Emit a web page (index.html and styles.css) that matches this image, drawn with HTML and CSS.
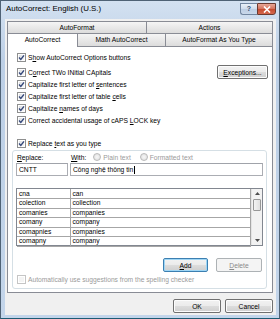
FILE: index.html
```html
<!DOCTYPE html>
<html lang="en">
<head>
    <meta charset="UTF-8">
    <title>AutoCorrect: English (U.S.)</title>
    <link rel="stylesheet" href="styles.css">
</head>
<body>
    <div class="window">
        <div class="titlebar">
            <span class="title">AutoCorrect: English (U.S.)</span>
            <div class="caption">
                <span class="cap-help">?</span>
                <span class="cap-close">
                    <svg width="8" height="7" viewBox="0 0 8 7"><path d="M1 0.5 L7 6.5 M7 0.5 L1 6.5" stroke="#fff" stroke-width="1.6"/></svg>
                </span>
            </div>
        </div>

        <div class="client">
            <div class="tabs">
                <div class="tab-row back">
                    <div class="tab w-139">AutoFormat</div>
                    <div class="tab w-127">Actions</div>
                </div>
                <div class="tab-row front">
                    <div class="tab selected w-70">AutoCorrect</div>
                    <div class="tab w-88">Math AutoCorrect</div>
                    <div class="tab w-108">AutoFormat As You Type</div>
                </div>
            </div>

            <div class="panel">
                <label class="opt">
                    <span class="cb checked"><svg viewBox="0 0 7 7"><path d="M1 3.6 L2.8 5.4 L6 1.4" /></svg></span>
                    <span>S<u>h</u>ow AutoCorrect Options buttons</span>
                </label>

                <div class="opt-group">
                    <div class="opt-list">
                        <label class="opt">
                            <span class="cb checked"><svg viewBox="0 0 7 7"><path d="M1 3.6 L2.8 5.4 L6 1.4" /></svg></span>
                            <span>C<u>o</u>rrect TWo INitial CApitals</span>
                        </label>
                        <label class="opt">
                            <span class="cb checked"><svg viewBox="0 0 7 7"><path d="M1 3.6 L2.8 5.4 L6 1.4" /></svg></span>
                            <span>Capitalize first letter of <u>s</u>entences</span>
                        </label>
                        <label class="opt">
                            <span class="cb checked"><svg viewBox="0 0 7 7"><path d="M1 3.6 L2.8 5.4 L6 1.4" /></svg></span>
                            <span>Capitalize first letter of table <u>c</u>ells</span>
                        </label>
                        <label class="opt">
                            <span class="cb checked"><svg viewBox="0 0 7 7"><path d="M1 3.6 L2.8 5.4 L6 1.4" /></svg></span>
                            <span>Capitalize <u>n</u>ames of days</span>
                        </label>
                        <label class="opt">
                            <span class="cb checked"><svg viewBox="0 0 7 7"><path d="M1 3.6 L2.8 5.4 L6 1.4" /></svg></span>
                            <span>Correct accidental usage of cAPS <u>L</u>OCK key</span>
                        </label>
                    </div>
                    <button class="btn exceptions"><u>E</u>xceptions...</button>
                </div>

                <label class="opt replace-opt">
                    <span class="cb checked"><svg viewBox="0 0 7 7"><path d="M1 3.6 L2.8 5.4 L6 1.4" /></svg></span>
                    <span>Replace <u>t</u>ext as you type</span>
                </label>

                <div class="replace-box">
                    <div class="field-labels">
                        <span class="lbl-replace"><u>R</u>eplace:</span>
                        <div class="with-line">
                            <span><u>W</u>ith:</span>
                            <span class="radio"></span><span class="disabled">Plain text</span>
                            <span class="radio second"></span><span class="disabled">Formatted text</span>
                        </div>
                    </div>
                    <div class="fields">
                        <div class="textbox short">CNTT</div>
                        <div class="textbox long">Công nghệ thông tin<span class="caret"></span></div>
                    </div>

                    <div class="listbox">
                        <table class="entries">
                            <tr><td class="from">cna</td><td>can</td></tr>
                            <tr><td class="from">colection</td><td>collection</td></tr>
                            <tr><td class="from">comanies</td><td>companies</td></tr>
                            <tr><td class="from">comany</td><td>company</td></tr>
                            <tr><td class="from">comapnies</td><td>companies</td></tr>
                            <tr><td class="from">comapny</td><td>company</td></tr>
                        </table>
                        <div class="scrollbar">
                            <div class="sb-arrow">
                                <svg width="5" height="3" viewBox="0 0 5 3"><path d="M0 3 L2.5 0 L5 3 Z" fill="#4d4d4d"/></svg>
                            </div>
                            <div class="sb-thumb"></div>
                            <div class="sb-track"></div>
                            <div class="sb-arrow">
                                <svg width="5" height="3" viewBox="0 0 5 3"><path d="M0 0 L2.5 3 L5 0 Z" fill="#4d4d4d"/></svg>
                            </div>
                        </div>
                    </div>

                    <div class="list-buttons">
                        <button class="btn default"><u>A</u>dd</button>
                        <button class="btn off"><u>D</u>elete</button>
                    </div>

                    <label class="opt auto-opt">
                        <span class="cb off"></span>
                        <span class="disabled">Automatically use suggestions from the spelling checker</span>
                    </label>
                </div>
            </div>

            <div class="footer">
                <button class="btn">OK</button>
                <button class="btn">Cancel</button>
            </div>
        </div>
    </div>
</body>
</html>
```

FILE: styles.css
```css
* {
    box-sizing: border-box;
}
body {
    margin: 0;
    font-family: "Liberation Sans", Arial, sans-serif;
    font-size: 6.7px;
    color: #000;
}
.window {
    width: 280px;
    height: 319px;
    display: flex;
    flex-direction: column;
    padding: 0 3px 3px 4px;
    background: linear-gradient(#d3e1f1, #bccfe6 60px, #c3d5ea);
    border: 1px solid #4f6275;
    border-bottom-color: #1d5b73;
}

/* title bar */
.titlebar {
    height: 18px;
    display: flex;
    justify-content: space-between;
    flex-shrink: 0;
}
.title {
    font-size: 7.9px;
    line-height: 16px;
    padding-left: 1px;
}
.caption {
    display: flex;
    margin-top: 2px;
    height: 12px;
}
.cap-help {
    width: 17px;
    border: 1px solid #7286a0;
    border-right: none;
    border-radius: 0 0 0 3px;
    background: linear-gradient(#e9f0f8, #cfdcec 50%, #bccde3 50%, #c9d8ea);
    color: #2e4a6e;
    font-size: 7px;
    font-weight: bold;
    text-align: center;
    line-height: 10px;
}
.cap-close {
    width: 19px;
    border: 1px solid #6b3a30;
    border-radius: 0 0 3px 0;
    background: linear-gradient(#e7a797, #d4715b 50%, #c44a2f 50%, #d4674d);
    display: flex;
    align-items: center;
    justify-content: center;
}

/* dialog face */
.client {
    flex: 1;
    display: flex;
    flex-direction: column;
    background: #f0f0f0;
    padding: 2px 3px 0 2px;
}

/* tabs */
.tab-row {
    display: flex;
    height: 12px;
}
.tab-row.front {
    height: 13px;
}
.tab {
    border: 1px solid #898c95;
    border-bottom: none;
    margin-right: -1px;
    background: linear-gradient(#f5f5f5, #e6e6e6 60%, #dcdcdc);
    text-align: center;
    line-height: 11px;
}
.tab-row.front .tab {
    line-height: 12px;
}
.tab:last-child {
    margin-right: 0;
}
.tab.selected {
    background: #fff;
    position: relative;
    z-index: 1;
    margin-bottom: -1px;
    height: 14px;
}
.w-139 { width: 140px; }
.w-127 { width: 127px; }
.w-70 { width: 71px; }
.w-88 { width: 89px; }
.w-108 { width: 108px; }

/* tab page */
.panel {
    height: 247px;
    flex-shrink: 0;
    background: #fff;
    border: 1px solid #898c95;
    padding: 5px 4px 0 9px;
}
.opt {
    display: flex;
    align-items: center;
    height: 11px;
}
.opt-group {
    display: flex;
    justify-content: space-between;
    margin-top: 3px;
}
.opt-list .opt {
    height: 12px;
}
.cb {
    width: 9px;
    height: 9px;
    margin-right: 2px;
    border: 1px solid #8e8f8f;
    background: linear-gradient(135deg, #d9dcdf, #f8f8f8);
    box-shadow: inset 0 0 0 1px #fff;
    display: flex;
    align-items: center;
    justify-content: center;
    flex-shrink: 0;
}
.cb svg {
    width: 7px;
    height: 7px;
}
.cb path {
    fill: none;
    stroke: #34477a;
    stroke-width: 1.4;
}
.cb.off {
    border-color: #c5c5c5;
    background: #f4f4f4;
}
.disabled {
    color: #9a9a9a;
}

/* buttons */
.btn {
    height: 14px;
    padding: 0;
    font: inherit;
    color: #000;
    border: 1px solid #707070;
    border-radius: 2px;
    background: linear-gradient(#f2f2f2, #ebebeb 50%, #dddddd 50%, #cfcfcf);
    box-shadow: inset 0 0 0 1px #fcfcfc;
}
.btn.exceptions {
    width: 51px;
    margin-top: -1px;
}
.btn.default {
    border-color: #3c7fb1;
    box-shadow: inset 0 0 0 1px #9fd6f5;
    width: 45px;
}
.btn.off {
    width: 46px;
    color: #8a8a8a;
    border-color: #adb2b5;
    background: #f4f4f4;
    box-shadow: none;
}

/* replace section */
.replace-opt {
    margin-top: 11px;
    height: 12px;
}
.replace-box {
    margin: 1px 1px 0 -5px;
    height: 139px;
    border: 1px solid #d5dfe5;
    border-radius: 3px;
    padding: 0 3px 0 3px;
}
.field-labels {
    display: flex;
    height: 12px;
    align-items: center;
}
.lbl-replace {
    width: 55px;
    padding-left: 1px;
}
.with-line {
    display: flex;
    align-items: center;
}
.radio {
    width: 8px;
    height: 8px;
    margin: 0 2px 0 7px;
    border: 1px solid #b9b9b9;
    border-radius: 50%;
    background: radial-gradient(#f7f7f7, #dcdcdc);
}
.radio.second {
    margin-left: 9px;
}
.fields {
    display: flex;
    gap: 2px;
}
.textbox {
    height: 13px;
    border: 1px solid #abadb3;
    border-top-color: #a0a3aa;
    background: #fff;
    padding-left: 2px;
    line-height: 11px;
    display: flex;
    align-items: center;
}
.textbox.short {
    width: 52px;
}
.textbox.long {
    flex: 1;
}
.caret {
    width: 1px;
    height: 8px;
    background: #000;
    margin-left: 1px;
}
.listbox {
    margin-top: 12px;
    height: 58px;
    border: 1px solid #828790;
    display: flex;
}
.entries {
    flex: 1;
    border-collapse: collapse;
    align-self: flex-start;
}
.entries td {
    height: 9.5px;
    padding: 0 0 0 2px;
    border: 1px solid #a6a6a6;
    border-top: none;
    line-height: 8px;
}
.entries td.from {
    width: 53px;
    border-left: none;
}
.scrollbar {
    width: 11px;
    display: flex;
    flex-direction: column;
    background: #f2f2f2;
    border-left: 1px solid #e4e4e4;
}
.sb-arrow {
    height: 9px;
    display: flex;
    align-items: center;
    justify-content: center;
}
.sb-thumb {
    height: 12px;
    margin: 1px 1px;
    border: 1px solid #979797;
    border-radius: 1px;
    background: linear-gradient(90deg, #f3f3f3, #e0e0e0);
}
.sb-track {
    flex: 1;
}
.list-buttons {
    display: flex;
    justify-content: flex-end;
    gap: 8px;
    margin: 12px 1px 0 0;
}
.auto-opt {
    height: 12px;
    margin: 1px 0 0 1px;
}

/* OK / Cancel */
.footer {
    display: flex;
    justify-content: flex-end;
    gap: 4px;
    padding-top: 6px;
}
.footer .btn {
    width: 48px;
}
```
